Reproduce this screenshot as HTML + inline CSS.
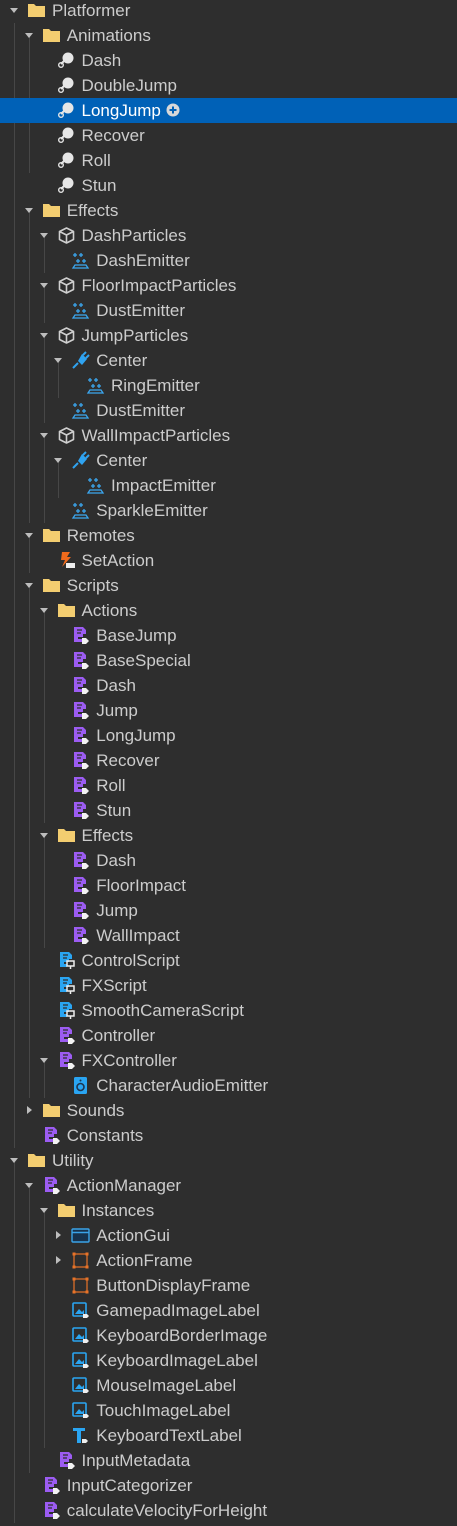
<!DOCTYPE html>
<html><head><meta charset="utf-8"><style>
body{margin:0;width:457px;height:1526px;background:#2e2e2e;overflow:hidden;position:relative;font-family:"Liberation Sans",sans-serif;}
.r{position:absolute;left:0;width:457px;height:25px;}
.r.sel{background:#0061b7;}
.t{position:absolute;top:3px;left:calc(52px + var(--l)*14.75px);font-size:17px;color:#cccccc;line-height:20px;white-space:nowrap;}
.sel .t{color:#fff;}
.a{position:absolute;top:8px;left:calc(10px + var(--l)*14.75px);width:0;height:0;}
.a.d{border-left:4px solid transparent;border-right:4px solid transparent;border-top:5px solid #bdbdbd;top:10px;}
.a.rr{border-top:4px solid transparent;border-bottom:4px solid transparent;border-left:5px solid #bdbdbd;left:calc(12px + var(--l)*14.75px);}
.i{position:absolute;top:3px;left:calc(27px + var(--l)*14.75px);width:19px;height:19px;}
.g{position:absolute;width:1px;background:#474747;}
</style></head><body>
<svg width="0" height="0" style="position:absolute">
<defs>
<symbol id="folder" viewBox="0 0 19 19"><path d="M1 3h6l2 2h9v11H1z" fill="#f3cd70"/></symbol>
<symbol id="anim" viewBox="0 0 19 19"><circle cx="11" cy="7" r="5.5" fill="#e6e6e6"/><path d="M7 10l-3 3" stroke="#e6e6e6" stroke-width="2"/><circle cx="4" cy="14" r="2.3" fill="none" stroke="#e6e6e6" stroke-width="1.4"/></symbol>
<symbol id="model" viewBox="0 0 19 19"><path d="M9.5 2l7 3.5v8l-7 3.5-7-3.5v-8z M2.5 5.5l7 3.5 7-3.5 M9.5 9v8" fill="none" stroke="#cfcfcf" stroke-width="1.6" stroke-linejoin="round"/></symbol>
<symbol id="emit" viewBox="0 0 19 19"><g stroke="#3ba7f0" stroke-width="1.3"><path d="M4 2v4M2 4h4M10 2v4M8 4h4M7 8v4M5 10h4M13 8v4M11 10h4"/><path d="M2 17l2-3h11l2 3z" fill="none"/></g></symbol>
<symbol id="attach" viewBox="0 0 19 19"><path d="M11 3l5 5-5 6-4-4z" fill="#2fa3f0"/><path d="M12 4l3-3M15 7l3-3M7 12l-5 5" stroke="#2fa3f0" stroke-width="2"/></symbol>
<symbol id="remote" viewBox="0 0 19 19"><path d="M5 1h8l-3 5h4l-9 10 3-7H4z" fill="#f06a1c"/><rect x="9" y="12" width="9" height="5" fill="#eee"/></symbol>
<symbol id="mod" viewBox="0 0 19 19"><path d="M3 1h9l3 3v4h-3v3h-5v2h4v3H3z" fill="#9c5cf2"/><path d="M6 4h5M6 7h4" stroke="#2e2e2e" stroke-width="1.3"/><path d="M11 12h4l3 3-3 3h-4z" fill="#f2f2f2"/></symbol>
<symbol id="loc" viewBox="0 0 19 19"><path d="M3 1h9l3 3v4h-3v3h-5v2h3v3H3z" fill="#2aa5f2"/><path d="M6 4h5M6 7h4" stroke="#2e2e2e" stroke-width="1.3"/><rect x="10" y="10" width="7" height="5" fill="none" stroke="#eee" stroke-width="1.5"/><path d="M13.5 15v3" stroke="#eee" stroke-width="1.5"/></symbol>
<symbol id="sound" viewBox="0 0 19 19"><rect x="3" y="1" width="13" height="17" rx="1.5" fill="#2aa5f2"/><circle cx="9.5" cy="11" r="3.5" fill="none" stroke="#1d3550" stroke-width="1.6"/><circle cx="9.5" cy="4.5" r="1" fill="#1d3550"/></symbol>
<symbol id="gui" viewBox="0 0 19 19"><rect x="1" y="3" width="17" height="13" rx="1" fill="#17324d" stroke="#3aa3e8" stroke-width="1.4"/><path d="M1 6.5h17" stroke="#3aa3e8" stroke-width="1.4"/></symbol>
<symbol id="frame" viewBox="0 0 19 19"><rect x="3" y="3" width="13" height="13" fill="none" stroke="#e87328" stroke-width="1.2"/><g fill="#e87328"><rect x="1.5" y="1.5" width="3" height="3"/><rect x="14.5" y="1.5" width="3" height="3"/><rect x="1.5" y="14.5" width="3" height="3"/><rect x="14.5" y="14.5" width="3" height="3"/></g></symbol>
<symbol id="img" viewBox="0 0 19 19"><rect x="2" y="2" width="13" height="13" rx="1" fill="none" stroke="#2aa5f2" stroke-width="1.6"/><path d="M4 13l4-5 3 3 2-2v4z" fill="#2aa5f2"/><path d="M12 13h4l2 2-2 2h-4z" fill="#eee"/></symbol>
<symbol id="txt" viewBox="0 0 19 19"><path d="M2 2h12v3H10v12H6V5H2z" fill="#2aa5f2"/><path d="M11 13h4l2 2-2 2h-4z" fill="#eee"/></symbol>
</defs></svg>

<div class="g" style="left:14px;top:22.5px;height:1125px"></div>
<div class="g" style="left:29px;top:35px;height:137.5px"></div>
<div class="g" style="left:29px;top:210px;height:312.5px"></div>
<div class="g" style="left:43.5px;top:235px;height:37.5px"></div>
<div class="g" style="left:43.5px;top:285px;height:37.5px"></div>
<div class="g" style="left:43.5px;top:335px;height:87.5px"></div>
<div class="g" style="left:58px;top:360px;height:37.5px"></div>
<div class="g" style="left:43.5px;top:435px;height:87.5px"></div>
<div class="g" style="left:58px;top:460px;height:37.5px"></div>
<div class="g" style="left:29px;top:535px;height:37.5px"></div>
<div class="g" style="left:29px;top:585px;height:512.5px"></div>
<div class="g" style="left:43.5px;top:610px;height:212.5px"></div>
<div class="g" style="left:43.5px;top:835px;height:112.5px"></div>
<div class="g" style="left:43.5px;top:1060px;height:37.5px"></div>
<div class="g" style="left:14px;top:1160px;height:362.5px"></div>
<div class="g" style="left:29px;top:1185px;height:287.5px"></div>
<div class="g" style="left:43.5px;top:1210px;height:237.5px"></div>

<div class="r" style="top:-2.5px;--l:0"><span class="a d"></span><svg class="i"><use href="#folder"/></svg><span class="t">Platformer</span></div>
<div class="r" style="top:22.5px;--l:1"><span class="a d"></span><svg class="i"><use href="#folder"/></svg><span class="t">Animations</span></div>
<div class="r" style="top:47.5px;--l:2"><svg class="i"><use href="#anim"/></svg><span class="t">Dash</span></div>
<div class="r" style="top:72.5px;--l:2"><svg class="i"><use href="#anim"/></svg><span class="t">DoubleJump</span></div>
<div class="r sel" style="top:97.5px;--l:2"><svg class="i"><use href="#anim"/></svg><span class="t">LongJump <svg width="14" height="14" viewBox="0 0 14 14" style="vertical-align:-1px"><circle cx="7" cy="7" r="6.5" fill="#d8d8d8"/><path d="M7 3.5v7M3.5 7h7" stroke="#0061b7" stroke-width="2"/></svg></span></div>
<div class="r" style="top:122.5px;--l:2"><svg class="i"><use href="#anim"/></svg><span class="t">Recover</span></div>
<div class="r" style="top:147.5px;--l:2"><svg class="i"><use href="#anim"/></svg><span class="t">Roll</span></div>
<div class="r" style="top:172.5px;--l:2"><svg class="i"><use href="#anim"/></svg><span class="t">Stun</span></div>
<div class="r" style="top:197.5px;--l:1"><span class="a d"></span><svg class="i"><use href="#folder"/></svg><span class="t">Effects</span></div>
<div class="r" style="top:222.5px;--l:2"><span class="a d"></span><svg class="i"><use href="#model"/></svg><span class="t">DashParticles</span></div>
<div class="r" style="top:247.5px;--l:3"><svg class="i"><use href="#emit"/></svg><span class="t">DashEmitter</span></div>
<div class="r" style="top:272.5px;--l:2"><span class="a d"></span><svg class="i"><use href="#model"/></svg><span class="t">FloorImpactParticles</span></div>
<div class="r" style="top:297.5px;--l:3"><svg class="i"><use href="#emit"/></svg><span class="t">DustEmitter</span></div>
<div class="r" style="top:322.5px;--l:2"><span class="a d"></span><svg class="i"><use href="#model"/></svg><span class="t">JumpParticles</span></div>
<div class="r" style="top:347.5px;--l:3"><span class="a d"></span><svg class="i"><use href="#attach"/></svg><span class="t">Center</span></div>
<div class="r" style="top:372.5px;--l:4"><svg class="i"><use href="#emit"/></svg><span class="t">RingEmitter</span></div>
<div class="r" style="top:397.5px;--l:3"><svg class="i"><use href="#emit"/></svg><span class="t">DustEmitter</span></div>
<div class="r" style="top:422.5px;--l:2"><span class="a d"></span><svg class="i"><use href="#model"/></svg><span class="t">WallImpactParticles</span></div>
<div class="r" style="top:447.5px;--l:3"><span class="a d"></span><svg class="i"><use href="#attach"/></svg><span class="t">Center</span></div>
<div class="r" style="top:472.5px;--l:4"><svg class="i"><use href="#emit"/></svg><span class="t">ImpactEmitter</span></div>
<div class="r" style="top:497.5px;--l:3"><svg class="i"><use href="#emit"/></svg><span class="t">SparkleEmitter</span></div>
<div class="r" style="top:522.5px;--l:1"><span class="a d"></span><svg class="i"><use href="#folder"/></svg><span class="t">Remotes</span></div>
<div class="r" style="top:547.5px;--l:2"><svg class="i"><use href="#remote"/></svg><span class="t">SetAction</span></div>
<div class="r" style="top:572.5px;--l:1"><span class="a d"></span><svg class="i"><use href="#folder"/></svg><span class="t">Scripts</span></div>
<div class="r" style="top:597.5px;--l:2"><span class="a d"></span><svg class="i"><use href="#folder"/></svg><span class="t">Actions</span></div>
<div class="r" style="top:622.5px;--l:3"><svg class="i"><use href="#mod"/></svg><span class="t">BaseJump</span></div>
<div class="r" style="top:647.5px;--l:3"><svg class="i"><use href="#mod"/></svg><span class="t">BaseSpecial</span></div>
<div class="r" style="top:672.5px;--l:3"><svg class="i"><use href="#mod"/></svg><span class="t">Dash</span></div>
<div class="r" style="top:697.5px;--l:3"><svg class="i"><use href="#mod"/></svg><span class="t">Jump</span></div>
<div class="r" style="top:722.5px;--l:3"><svg class="i"><use href="#mod"/></svg><span class="t">LongJump</span></div>
<div class="r" style="top:747.5px;--l:3"><svg class="i"><use href="#mod"/></svg><span class="t">Recover</span></div>
<div class="r" style="top:772.5px;--l:3"><svg class="i"><use href="#mod"/></svg><span class="t">Roll</span></div>
<div class="r" style="top:797.5px;--l:3"><svg class="i"><use href="#mod"/></svg><span class="t">Stun</span></div>
<div class="r" style="top:822.5px;--l:2"><span class="a d"></span><svg class="i"><use href="#folder"/></svg><span class="t">Effects</span></div>
<div class="r" style="top:847.5px;--l:3"><svg class="i"><use href="#mod"/></svg><span class="t">Dash</span></div>
<div class="r" style="top:872.5px;--l:3"><svg class="i"><use href="#mod"/></svg><span class="t">FloorImpact</span></div>
<div class="r" style="top:897.5px;--l:3"><svg class="i"><use href="#mod"/></svg><span class="t">Jump</span></div>
<div class="r" style="top:922.5px;--l:3"><svg class="i"><use href="#mod"/></svg><span class="t">WallImpact</span></div>
<div class="r" style="top:947.5px;--l:2"><svg class="i"><use href="#loc"/></svg><span class="t">ControlScript</span></div>
<div class="r" style="top:972.5px;--l:2"><svg class="i"><use href="#loc"/></svg><span class="t">FXScript</span></div>
<div class="r" style="top:997.5px;--l:2"><svg class="i"><use href="#loc"/></svg><span class="t">SmoothCameraScript</span></div>
<div class="r" style="top:1022.5px;--l:2"><svg class="i"><use href="#mod"/></svg><span class="t">Controller</span></div>
<div class="r" style="top:1047.5px;--l:2"><span class="a d"></span><svg class="i"><use href="#mod"/></svg><span class="t">FXController</span></div>
<div class="r" style="top:1072.5px;--l:3"><svg class="i"><use href="#sound"/></svg><span class="t">CharacterAudioEmitter</span></div>
<div class="r" style="top:1097.5px;--l:1"><span class="a rr"></span><svg class="i"><use href="#folder"/></svg><span class="t">Sounds</span></div>
<div class="r" style="top:1122.5px;--l:1"><svg class="i"><use href="#mod"/></svg><span class="t">Constants</span></div>
<div class="r" style="top:1147.5px;--l:0"><span class="a d"></span><svg class="i"><use href="#folder"/></svg><span class="t">Utility</span></div>
<div class="r" style="top:1172.5px;--l:1"><span class="a d"></span><svg class="i"><use href="#mod"/></svg><span class="t">ActionManager</span></div>
<div class="r" style="top:1197.5px;--l:2"><span class="a d"></span><svg class="i"><use href="#folder"/></svg><span class="t">Instances</span></div>
<div class="r" style="top:1222.5px;--l:3"><span class="a rr"></span><svg class="i"><use href="#gui"/></svg><span class="t">ActionGui</span></div>
<div class="r" style="top:1247.5px;--l:3"><span class="a rr"></span><svg class="i"><use href="#frame"/></svg><span class="t">ActionFrame</span></div>
<div class="r" style="top:1272.5px;--l:3"><svg class="i"><use href="#frame"/></svg><span class="t">ButtonDisplayFrame</span></div>
<div class="r" style="top:1297.5px;--l:3"><svg class="i"><use href="#img"/></svg><span class="t">GamepadImageLabel</span></div>
<div class="r" style="top:1322.5px;--l:3"><svg class="i"><use href="#img"/></svg><span class="t">KeyboardBorderImage</span></div>
<div class="r" style="top:1347.5px;--l:3"><svg class="i"><use href="#img"/></svg><span class="t">KeyboardImageLabel</span></div>
<div class="r" style="top:1372.5px;--l:3"><svg class="i"><use href="#img"/></svg><span class="t">MouseImageLabel</span></div>
<div class="r" style="top:1397.5px;--l:3"><svg class="i"><use href="#img"/></svg><span class="t">TouchImageLabel</span></div>
<div class="r" style="top:1422.5px;--l:3"><svg class="i"><use href="#txt"/></svg><span class="t">KeyboardTextLabel</span></div>
<div class="r" style="top:1447.5px;--l:2"><svg class="i"><use href="#mod"/></svg><span class="t">InputMetadata</span></div>
<div class="r" style="top:1472.5px;--l:1"><svg class="i"><use href="#mod"/></svg><span class="t">InputCategorizer</span></div>
<div class="r" style="top:1497.5px;--l:1"><svg class="i"><use href="#mod"/></svg><span class="t">calculateVelocityForHeight</span></div>
</body></html>
